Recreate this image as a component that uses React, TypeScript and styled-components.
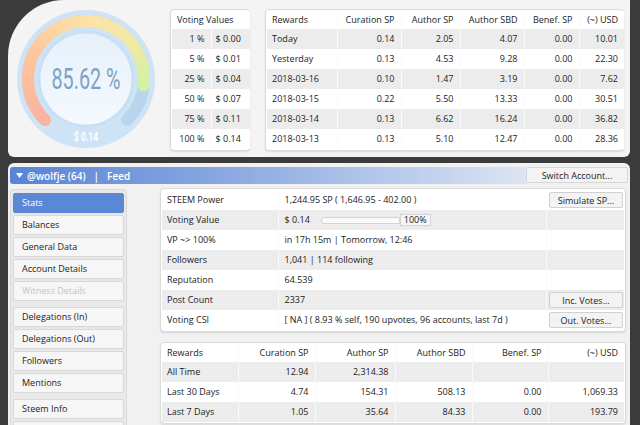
import React from 'react'
import styled, { createGlobalStyle } from 'styled-components'

const GlobalStyle = createGlobalStyle`
  html, body {
    margin: 0;
    padding: 0;
    background: #3b3b3b;
    overflow: hidden;
  }
  body {
    font-family: 'Open Sans', 'Noto Sans', sans-serif;
    font-size: 9px;
    color: #222;
  }
`

const votingValues = [
  ['1 %', '$ 0.00'],
  ['5 %', '$ 0.01'],
  ['25 %', '$ 0.04'],
  ['50 %', '$ 0.07'],
  ['75 %', '$ 0.11'],
  ['100 %', '$ 0.14'],
]

const dailyRewards = [
  ['Today', '0.14', '2.05', '4.07', '0.00', '10.01'],
  ['Yesterday', '0.13', '4.53', '9.28', '0.00', '22.30'],
  ['2018-03-16', '0.10', '1.47', '3.19', '0.00', '7.62'],
  ['2018-03-15', '0.22', '5.50', '13.33', '0.00', '30.51'],
  ['2018-03-14', '0.13', '6.62', '16.24', '0.00', '36.82'],
  ['2018-03-13', '0.13', '5.10', '12.47', '0.00', '28.36'],
]

const totalRewards = [
  ['All Time', '12.94', '2,314.38', '', '', ''],
  ['Last 30 Days', '4.74', '154.31', '508.13', '0.00', '1,069.33'],
  ['Last 7 Days', '1.05', '35.64', '84.33', '0.00', '193.79'],
]

const rewardHeads = ['Rewards', 'Curation SP', 'Author SP', 'Author SBD', 'Benef. SP', '(~) USD']

// last entry only peeks in at the bottom edge
const menu = [
  { label: 'Stats', active: true },
  { label: 'Balances' },
  { label: 'General Data' },
  { label: 'Account Details' },
  { label: 'Witness Details', disabled: true },
  { label: 'Delegations (In)', group: true },
  { label: 'Delegations (Out)' },
  { label: 'Followers' },
  { label: 'Mentions' },
  { label: 'Steem Info', group: true },
  { label: '' },
]

// gauge helpers
const CX = 69
const START = 135
const SWEEP = 270
const VP = 0.8562

const stops: [number, number[]][] = [
  [0, [251, 178, 160]],
  [0.25, [253, 198, 156]],
  [0.5, [253, 226, 166]],
  [0.7, [240, 234, 166]],
  [0.86, [210, 242, 164]],
  [1, [200, 240, 170]],
]

const colorAt = (f: number) => {
  for (let i = 1; i < stops.length; i++) {
    if (f <= stops[i][0]) {
      const [f0, c0] = stops[i - 1]
      const [f1, c1] = stops[i]
      const t = (f - f0) / (f1 - f0)
      const c = c0.map((v, k) => Math.round(v + (c1[k] - v) * t))
      return `rgb(${c[0]},${c[1]},${c[2]})`
    }
  }
  return 'rgb(200,240,170)'
}

const pt = (deg: number, r: number) => {
  const a = (deg * Math.PI) / 180
  return [CX + r * Math.cos(a), CX + r * Math.sin(a)]
}

const arc = (a0: number, a1: number, r: number) => {
  const [x0, y0] = pt(a0, r)
  const [x1, y1] = pt(a1, r)
  const large = a1 - a0 > 180 ? 1 : 0
  return `M ${x0} ${y0} A ${r} ${r} 0 ${large} 1 ${x1} ${y1}`
}

const Gauge: React.FC = () => {
  const R = 58
  const segs = 90
  const end = START + SWEEP * VP
  const parts = []
  for (let i = 0; i < segs; i++) {
    const f0 = i / segs
    const f1 = (i + 1) / segs
    const a0 = START + (end - START) * f0
    const a1 = START + (end - START) * f1 + 0.6
    parts.push(
      <path key={i} d={arc(a0, a1, R)} stroke={colorAt(((f0 + f1) / 2) * VP)} strokeWidth={12} fill='none' />
    )
  }
  const [sx, sy] = pt(START, R)
  const [ex, ey] = pt(end, R)
  return (
    <svg width='138' height='138' viewBox='0 0 138 138'>
      <defs>
        <linearGradient id='inner' x1='0' y1='0' x2='0' y2='1'>
          <stop offset='0' stopColor='#e6f0fa' />
          <stop offset='1' stopColor='#f4f9fe' />
        </linearGradient>
      </defs>
      <circle cx={CX} cy={CX} r={69} fill='#cee3f5' />
      <path d={arc(START, START + SWEEP, R)} stroke='#b8d5ed' strokeWidth={12} strokeLinecap='round' fill='none' />
      {parts}
      <circle cx={sx} cy={sy} r={6} fill={colorAt(0)} />
      <circle cx={ex} cy={ey} r={6} fill={colorAt(VP)} />
      <circle cx={CX} cy={CX} r={47} fill='url(#inner)' stroke='#c9e0f4' strokeWidth={3} />
      <text
        x={CX}
        y={79}
        textAnchor='middle'
        fontSize={29}
        fill='#7fa2c4'
        fontFamily='Roboto, sans-serif'
        textLength={69}
        lengthAdjust='spacingAndGlyphs'
      >
        85.62 %
      </text>
      <text
        x={CX}
        y={131}
        textAnchor='middle'
        fontSize={12.5}
        fontWeight='bold'
        fill='#ffffff'
        fontFamily='Roboto, sans-serif'
        textLength={24}
        lengthAdjust='spacingAndGlyphs'
      >
        $ 0.14
      </text>
    </svg>
  )
}

const App: React.FC = () => {
  return (
    <>
      <GlobalStyle />
      <Page>
        <TopPanel>
          <GaugeBox>
            <Gauge />
          </GaugeBox>
          <Card $width={80} $gap={15}>
            <Table>
              <colgroup>
                <col style={{ width: 39 }} />
                <col style={{ width: 39 }} />
              </colgroup>
              <tbody>
                <Tr $head>
                  <Td colSpan={2}>Voting Values</Td>
                </Tr>
                {votingValues.map(([pct, val], i) => (
                  <Tr key={pct} $shade={i % 2 === 0}>
                    <Td $right $shade={i % 2 === 0}>{pct}</Td>
                    <Td $shade={i % 2 === 0} $pad={4}>{val}</Td>
                  </Tr>
                ))}
              </tbody>
            </Table>
          </Card>
          <Card $width={359} $gap={15}>
            <Table>
              <colgroup>
                {[70, 64, 59, 64, 55, 45].map((w, i) => (
                  <col key={i} style={{ width: w }} />
                ))}
              </colgroup>
              <tbody>
                <Tr $head>
                  {rewardHeads.map((h, i) => (
                    <Td key={h} $right={i > 0}>{h}</Td>
                  ))}
                </Tr>
                {dailyRewards.map((row, i) => (
                  <Tr key={row[0]} $shade={i % 2 === 0}>
                    {row.map((c, j) => (
                      <Td key={j} $right={j > 0} $shade={i % 2 === 0}>{c}</Td>
                    ))}
                  </Tr>
                ))}
              </tbody>
            </Table>
          </Card>
        </TopPanel>

        <BottomPanel>
          <Header>
            <HeaderTitle>
              <svg width='7' height='5' viewBox='0 0 7 5'>
                <path d='M0 0 H7 L3.5 5 Z' fill='#fff' />
              </svg>
              <span>@wolfje (64)</span>
              <span>|</span>
              <span>Feed</span>
            </HeaderTitle>
            <SwitchButton>Switch Account...</SwitchButton>
          </Header>

          <Body>
            <Menu>
              {menu.map((m, i) => (
                <MenuItem key={i} $active={m.active} $disabled={m.disabled} $group={m.group}>
                  {m.label}
                </MenuItem>
              ))}
            </Menu>

            <Main>
              <Card>
                <Table>
                  <colgroup>
                    <col style={{ width: 116 }} />
                    <col />
                    <col style={{ width: 78 }} />
                  </colgroup>
                  <tbody>
                    <Tr>
                      <Td>STEEM Power</Td>
                      <Td $pad={6}>1,244.95 SP ( 1,646.95 - 402.00 )</Td>
                      <Td $btn><SmallButton>Simulate SP...</SmallButton></Td>
                    </Tr>
                    <Tr $shade>
                      <Td $shade>Voting Value</Td>
                      <Td $shade $pad={6}>
                        <ValueBar>
                          <span>$ 0.14</span>
                          <Meter>
                            <MeterTrack />
                            <MeterLabel>100%</MeterLabel>
                          </Meter>
                        </ValueBar>
                      </Td>
                      <Td $shade />
                    </Tr>
                    <Tr>
                      <Td>VP ~&gt; 100%</Td>
                      <Td $pad={6}>in 17h 15m | Tomorrow, 12:46</Td>
                      <Td />
                    </Tr>
                    <Tr $shade>
                      <Td $shade>Followers</Td>
                      <Td $shade $pad={6}>1,041 | 114 following</Td>
                      <Td $shade />
                    </Tr>
                    <Tr>
                      <Td>Reputation</Td>
                      <Td $pad={6}>64.539</Td>
                      <Td />
                    </Tr>
                    <Tr $shade>
                      <Td $shade>Post Count</Td>
                      <Td $shade $pad={6}>2337</Td>
                      <Td $shade $btn><SmallButton>Inc. Votes...</SmallButton></Td>
                    </Tr>
                    <Tr>
                      <Td>Voting CSI</Td>
                      <Td $pad={6}>[ NA ] ( 8.93 % self, 190 upvotes, 96 accounts, last 7d )</Td>
                      <Td $btn><SmallButton>Out. Votes...</SmallButton></Td>
                    </Tr>
                  </tbody>
                </Table>
              </Card>

              <Card $top={10}>
                <Table>
                  <colgroup>
                    {[76, 77, 80, 77, 76, 76].map((w, i) => (
                      <col key={i} style={{ width: w }} />
                    ))}
                  </colgroup>
                  <tbody>
                    <Tr $head>
                      {rewardHeads.map((h, i) => (
                        <Td key={h} $right={i > 0}>{h}</Td>
                      ))}
                    </Tr>
                    {totalRewards.map((row, i) => (
                      <Tr key={row[0]} $shade={i % 2 === 0}>
                        {row.map((c, j) => (
                          <Td key={j} $right={j > 0} $shade={i % 2 === 0}>{c}</Td>
                        ))}
                      </Tr>
                    ))}
                  </tbody>
                </Table>
              </Card>
            </Main>
          </Body>
        </BottomPanel>
      </Page>
    </>
  )
}

const Page = styled.div`
  width: 640px;
  height: 425px;
  box-sizing: border-box;
  padding: 0 10px 0 8px;
  overflow: hidden;
`
const TopPanel = styled.div`
  display: flex;
  align-items: flex-start;
  height: 157px;
  box-sizing: border-box;
  padding: 9px 6px 0 9px;
  background: #f4f4f4;
  border-radius: 56px 0 6px 6px;
`
const GaugeBox = styled.div`
  flex: none;
  width: 138px;
  height: 138px;
  margin-top: 1px;
  svg {
    display: block;
  }
`
const Card = styled.div<{ $width?: number; $gap?: number; $top?: number }>`
  flex: none;
  box-sizing: border-box;
  width: ${(p) => (p.$width ? `${p.$width}px` : 'auto')};
  margin-left: ${(p) => p.$gap || 0}px;
  margin-top: ${(p) => p.$top || 0}px;
  padding: 1px;
  background: #fff;
  border: 1px solid #dadada;
  border-radius: 4px;
  box-shadow: 0 1px 2px rgba(0, 0, 0, 0.1);
`
const Table = styled.table`
  width: 100%;
  border-collapse: collapse;
  table-layout: fixed;
`
const Tr = styled.tr<{ $shade?: boolean; $head?: boolean }>`
  height: ${(p) => (p.$head ? 18 : 20)}px;
  background: ${(p) => (p.$shade ? '#ececec' : '#fff')};
`
const Td = styled.td<{ $right?: boolean; $shade?: boolean; $pad?: number; $btn?: boolean }>`
  padding: ${(p) => (p.$btn ? '0 1px 0 0' : `0 6px 0 ${p.$pad ?? 5}px`)};
  text-align: ${(p) => (p.$right || p.$btn ? 'right' : 'left')};
  white-space: nowrap;
  overflow: hidden;
  line-height: 12px;
  & + & {
    border-left: 1px solid ${(p) => (p.$shade ? '#fafafa' : '#efefef')};
  }
`
const BottomPanel = styled.div`
  margin-top: 6px;
  height: 270px;
  padding: 4px 2px 0;
  background: #f1f1f1;
  border-radius: 6px 6px 0 0;
`
const Header = styled.div`
  display: flex;
  height: 17px;
`
const HeaderTitle = styled.div`
  flex: 1;
  display: flex;
  align-items: center;
  gap: 4px;
  padding-left: 6px;
  border-radius: 3px 0 0 3px;
  background: linear-gradient(to right, #5784d6 0%, #8eabe2 45%, #dce5f3 100%);
  color: #fff;
  font-size: 10px;
  font-weight: 600;
  span + span {
    margin-left: 4px;
  }
`
const SwitchButton = styled.button`
  flex: none;
  width: 102px;
  height: 16px;
  padding: 0;
  background: #f3f3f3;
  border: 1px solid #d6d6d6;
  border-radius: 2px;
  font-family: inherit;
  font-size: 9px;
  color: #222;
`
const Body = styled.div`
  display: flex;
  align-items: flex-start;
  margin-top: 4px;
`
const Menu = styled.div`
  flex: none;
  width: 117px;
  box-sizing: border-box;
  margin-top: 1px;
  padding: 3px 2px;
  background: #e9e9e9;
  border: 1px solid #dadada;
  border-radius: 3px;
  height: 260px;
`
const MenuItem = styled.div<{ $active?: boolean; $disabled?: boolean; $group?: boolean }>`
  height: 20px;
  box-sizing: border-box;
  margin-top: ${(p) => (p.$group ? 6 : 2)}px;
  padding-left: 8px;
  line-height: 18px;
  border: 1px solid ${(p) => (p.$active ? '#5b88d6' : '#d8d8d8')};
  border-radius: 2px;
  background: ${(p) => (p.$active ? '#5b88d6' : '#f6f6f6')};
  color: ${(p) => (p.$active ? '#fff' : p.$disabled ? '#c4c4c4' : '#222')};
  &:first-child {
    margin-top: 0;
  }
`
const Main = styled.div`
  flex: 1;
  margin: 0 2px 0 33px;
`
const SmallButton = styled.button`
  width: 74px;
  height: 16px;
  padding: 0;
  background: #f3f3f3;
  border: 1px solid #d0d0d0;
  border-radius: 2px;
  font-family: inherit;
  font-size: 9px;
  color: #222;
  vertical-align: middle;
`
const ValueBar = styled.div`
  display: flex;
  align-items: center;
  gap: 11px;
`
const Meter = styled.div`
  display: flex;
  align-items: center;
`
const MeterTrack = styled.div`
  width: 79px;
  height: 7px;
  box-sizing: border-box;
  border: 1px solid #d4d4d4;
  border-radius: 3px 0 0 3px;
  background: #fafafa;
`
const MeterLabel = styled.div`
  height: 12px;
  box-sizing: border-box;
  padding: 0 3px;
  line-height: 10px;
  border: 1px solid #d4d4d4;
  background: #f7f7f7;
  font-size: 9px;
`

export default App
